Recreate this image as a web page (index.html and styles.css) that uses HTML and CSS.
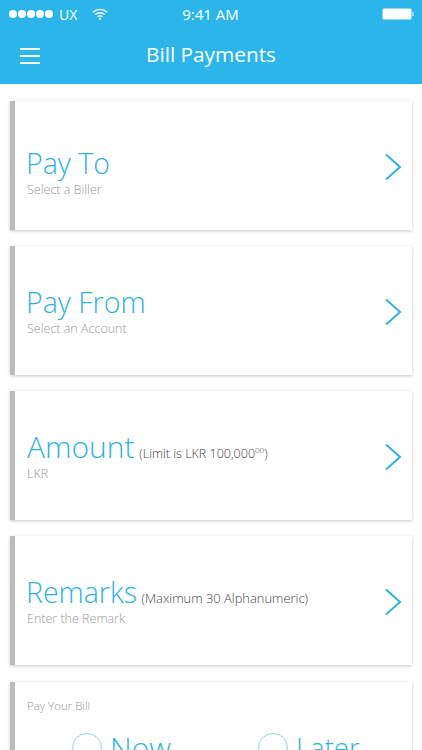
FILE: index.html
```html
<!DOCTYPE html>
<html lang="en">
<head>
    <meta charset="UTF-8">
    <meta name="viewport" content="width=device-width, initial-scale=1.0">
    <title>Bill Payments</title>
    <link rel="stylesheet" href="styles.css">
</head>
<body>
    <header class="header">
        <div class="status-bar">
            <div class="status-left">
                <span class="signal"><i></i><i></i><i></i><i></i><i></i></span>
                <span class="carrier">UX</span>
                <svg class="wifi" width="16" height="12" viewBox="0 0 16 12">
                    <path d="M1 4.2a10 10 0 0 1 14 0M3.4 6.6a6.6 6.6 0 0 1 9.2 0M5.7 8.8a3.3 3.3 0 0 1 4.6 0" fill="none" stroke="#fff" stroke-width="1.4"/>
                    <circle cx="8" cy="10.8" r="1.1" fill="#fff"/>
                </svg>
            </div>
            <span class="time">9:41 AM</span>
            <div class="battery"><span class="battery-level"></span></div>
        </div>
        <div class="title-bar">
            <button class="menu-button"><i></i><i></i><i></i></button>
            <h1>Bill Payments</h1>
        </div>
    </header>

    <main class="list">
        <section class="card card-first">
            <div class="card-text">
                <h2>Pay To</h2>
                <p>Select a Biller</p>
            </div>
            <svg class="chevron" width="17" height="28" viewBox="0 0 17 28"><path d="M1 1.5l14 12.5L1 26.5" fill="none" stroke="#2fb2e4" stroke-width="2"/></svg>
        </section>
        <section class="card">
            <div class="card-text">
                <h2>Pay From</h2>
                <p>Select an Account</p>
            </div>
            <svg class="chevron" width="17" height="28" viewBox="0 0 17 28"><path d="M1 1.5l14 12.5L1 26.5" fill="none" stroke="#2fb2e4" stroke-width="2"/></svg>
        </section>
        <section class="card">
            <div class="card-text">
                <h2 class="title-large">Amount <small>(Limit is LKR 100,000<sup>00</sup>)</small></h2>
                <p>LKR</p>
            </div>
            <svg class="chevron" width="17" height="28" viewBox="0 0 17 28"><path d="M1 1.5l14 12.5L1 26.5" fill="none" stroke="#2fb2e4" stroke-width="2"/></svg>
        </section>
        <section class="card">
            <div class="card-text">
                <h2>Remarks <small class="note-wide">(Maximum 30 Alphanumeric)</small></h2>
                <p>Enter the Remark</p>
            </div>
            <svg class="chevron" width="17" height="28" viewBox="0 0 17 28"><path d="M1 1.5l14 12.5L1 26.5" fill="none" stroke="#2fb2e4" stroke-width="2"/></svg>
        </section>
        <section class="card card-when">
            <p>Pay Your Bill</p>
            <div class="options">
                <label class="option"><span class="radio"></span>Now</label>
                <label class="option option-later"><span class="radio"></span>Later</label>
            </div>
        </section>
    </main>
</body>
</html>
```

FILE: styles.css
```css
html, body {
    height: 750px;
    overflow: hidden;
}

body {
    margin: 0;
    background-color: #fff;
    font-family: "Open Sans", sans-serif;
    font-weight: 300;
    color: #fff;
}

.header {
    height: 84px;
    background-color: #2bb5ea;
}

.status-bar {
    display: grid;
    grid-template-columns: 1fr auto 1fr;
    align-items: center;
    height: 28px;
    padding: 0 10px 0 9px;
}

.status-left {
    display: flex;
    align-items: center;
}

.signal {
    display: flex;
    gap: 1px;
}

.signal i {
    width: 8px;
    height: 8px;
    border-radius: 50%;
    background-color: #fff;
}

.carrier {
    margin-left: 6px;
    font-size: 14px;
    font-weight: 400;
}

.wifi {
    margin-left: 15px;
}

.time {
    font-size: 15px;
    font-weight: 400;
}

.battery {
    position: relative;
    justify-self: end;
    width: 28px;
    height: 10px;
    padding: 1px;
    border-radius: 2px;
    background-color: #8fd6f3;
}

.battery::after {
    content: "";
    position: absolute;
    left: 30px;
    top: 4px;
    width: 2px;
    height: 4px;
    background-color: #8fd6f3;
}

.battery-level {
    display: block;
    width: 100%;
    height: 100%;
    border-radius: 1px;
    background-color: #fff;
}

.title-bar {
    display: flex;
    align-items: center;
    justify-content: center;
    position: relative;
    height: 52px;
}

.menu-button {
    position: absolute;
    left: 20px;
    top: 20px;
    display: flex;
    flex-direction: column;
    gap: 5px;
    padding: 0;
    border: none;
    background: none;
}

.menu-button i {
    width: 20px;
    height: 2px;
    background-color: #fff;
}

h1 {
    margin: 0;
    font-size: 20.8px;
    font-weight: 400;
}

.list {
    display: flex;
    flex-direction: column;
    gap: 16px;
    padding: 17px 10px 0;
}

.card {
    display: flex;
    align-items: center;
    justify-content: space-between;
    flex-shrink: 0;
    box-sizing: border-box;
    height: 129px;
    padding: 0 10px 0 12px;
    border-left: 5px solid #bbb;
    background-color: #fff;
    box-shadow: 0 1px 3px rgba(0, 0, 0, 0.22);
}

.card-text {
    margin-top: 2px;
    min-width: 0;
}

.card-first .card-text {
    margin-top: 14px;
}

h2 {
    margin: 0 0 3px -1px;
    font-size: 28.5px;
    font-weight: 300;
    line-height: 32px;
    white-space: nowrap;
    color: #2fb2e4;
}

.title-large {
    margin-left: 0;
    font-size: 30px;
}

h2 small {
    margin-left: -3px;
    font-size: 12.5px;
    font-weight: 300;
    line-height: 0;
    color: #444;
}

h2 .note-wide {
    font-size: 12.9px;
}

sup {
    font-size: 8px;
    line-height: 0;
}

.card p {
    margin: 0;
    font-size: 12.5px;
    line-height: 16px;
    color: #999;
}

.chevron {
    flex-shrink: 0;
    margin-top: 2px;
}

.card-when {
    display: block;
    height: 120px;
    margin-top: 1px;
    padding-top: 16px;
}

.card-when p {
    font-size: 11.5px;
}

.options {
    display: grid;
    grid-template-columns: 186px auto;
    margin: 16px 0 0 45px;
}

.option {
    display: flex;
    align-items: center;
    gap: 8px;
    font-size: 30px;
    line-height: 36px;
    color: #2fb2e4;
}

.option-later {
    font-size: 27.5px;
}

.radio {
    width: 28px;
    height: 28px;
    border: 1px solid #8fd3ee;
    border-radius: 50%;
}
```
